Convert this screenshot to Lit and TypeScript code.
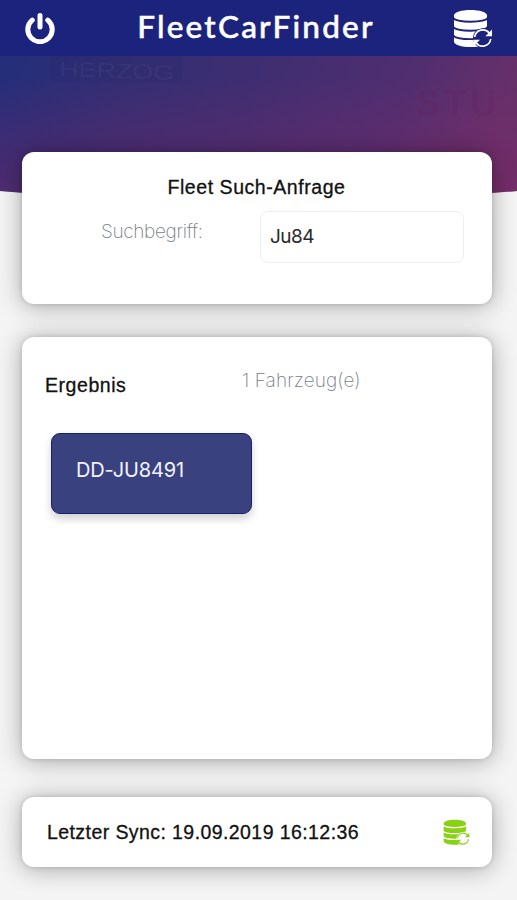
import { LitElement, html, svg, css } from "lit";
import { customElement, property } from "lit/decorators.js";

@customElement("database-sync-icon")
class DatabaseSyncIcon extends LitElement {
  static styles = css`
    :host { display: block; color: #fff; --ring: #1b237d; }
    svg { display: block; width: 100%; height: 100%; }
    .body { fill: currentColor; }
    .gap { fill: none; stroke: var(--ring); stroke-width: 1.9; }
    .knock { fill: var(--ring); }
    .arc { fill: none; stroke: currentColor; stroke-width: 1.7; }
  `;
  render() {
    return html`<svg viewBox="0 0 40 40">
      <path class="body" d="M1 6.5C1 3.2 8.500 1 17.500 1S34 3.200 34 6.500V32.500C34 36 26.500 38 17.500 38S1 36 1 32.500Z" />
      ${[8.8, 17.8, 26.2].map(
        (y) => svg`<path class="gap" d="M0 ${y}C3 ${y + 5.2} 32 ${y + 5.2} 35 ${y}" />`
      )}
      <circle class="knock" cx="29.700" cy="29" r="9.800" />
      <path class="arc" d="M21.700 28A8.200 8.200 0 0 1 36.400 24.200M37.700 30A8.200 8.200 0 0 1 23 33.800" />
      <path class="body" d="M39 20.500V27.200H32.400ZM20.400 37.500V30.800H27Z" />
    </svg>`;
  }
}

@customElement("app-card")
class AppCard extends LitElement {
  static styles = css`
    :host {
      display: block;
      box-sizing: border-box;
      margin: 0 25px 0 22px;
      background: #fff;
      border-radius: 12px;
      box-shadow: 0 2px 24px rgba(0, 0, 0, 0.32), 0 0 5px rgba(0, 0, 0, 0.14);
    }
  `;
  render() {
    return html`<slot></slot>`;
  }
}

@customElement("vehicle-tile")
class VehicleTile extends LitElement {
  @property() plate = "";
  static styles = css`
    :host {
      display: block;
      box-sizing: border-box;
      width: 201px;
      height: 81px;
      padding: 23px 24px;
      border: 1.5px solid #16206f;
      border-radius: 9px;
      background: #3a417f;
      box-shadow: 0 5px 8px rgba(0, 0, 0, 0.18);
      color: #f1f3ff;
      font: 400 20px/26px Inter, sans-serif;
      letter-spacing: -0.15px;
      white-space: nowrap;
    }
  `;
  render() {
    return html`${this.plate}`;
  }
}

@customElement("app-root")
class AppRoot extends LitElement {
  static styles = css`
    :host {
      display: flex;
      flex-direction: column;
      position: relative;
      height: 900px;
      overflow: hidden;
      background: #f4f4f4;
      color: #111;
      font-family: "Liberation Sans", Arial, sans-serif;
    }
    header {
      display: grid;
      grid-template-columns: 60px 1fr 60px;
      align-items: center;
      flex: none;
      height: 56px;
      background: #1b237d;
      color: #fff;
      position: relative;
    }
    .power { width: 32px; height: 32px; margin-left: 24px; }
    .title {
      margin: 0;
      padding: 0 5px 5px 0;
      text-align: center;
      font: 500 31.5px/36px Lato, sans-serif;
      letter-spacing: 2.2px;
      -webkit-text-stroke: 0.5px #fff;
      white-space: nowrap;
    }
    .sync { width: 40px; height: 40px; margin: 1px 0 0 -4px; }
    .hero {
      position: absolute;
      top: 56px;
      left: 0;
      width: 100%;
      height: 142px;
    }
    .ghost { font: 400 21px "Liberation Sans", sans-serif; fill: #5a5a96; fill-opacity: 0.2; }
    .ghost.red { font-size: 36px; font-weight: 700; fill: #641753; fill-opacity: 0.2; }
    main { display: flex; flex-direction: column; position: relative; padding-top: 96px; }
    h2 { margin: 0; font-size: 19.5px; font-weight: 400; line-height: 24px; -webkit-text-stroke: 0.3px #111; white-space: nowrap; }
    .search { height: 152px; padding: 23px 28px 0 79px; }
    .search h2 { text-align: center; padding-right: 52px; letter-spacing: 0.55px; }
    .field { display: flex; justify-content: space-between; margin-top: 12px; }
    label, .count { color: #777d84; font: 200 19px/24px Inter, sans-serif; white-space: nowrap; }
    label { margin-top: 9px; letter-spacing: -0.35px; }
    .count { margin-top: 1px; letter-spacing: 0.1px; }
    input {
      box-sizing: border-box;
      width: 204px;
      height: 52px;
      padding: 0 9px 2px;
      border: 1px solid #eee;
      border-radius: 8px;
      outline: none;
      background: #fff;
      color: #2a2a2a;
      font: 400 19px Inter, sans-serif;
      letter-spacing: -0.5px;
    }
    .results { height: 422px; margin-top: 33px; padding: 31px 23px; }
    .summary { display: grid; grid-template-columns: 197px 1fr; height: 65px; }
    .summary h2 { margin-top: 5px; letter-spacing: 0.55px; }
    .status {
      display: flex;
      align-items: center;
      justify-content: space-between;
      height: 70px;
      margin-top: 38px;
      padding: 0 22px 0 25px;
    }
    .status h2 { letter-spacing: 0.42px; }
    .mini { width: 27px; height: 27px; color: #88d113; --ring: #fff; }
    vehicle-tile { margin-left: 6px; }
  `;

  render() {
    return html`
      <svg class="hero" viewBox="0 0 517 142" preserveAspectRatio="none">
        <defs>
          <linearGradient id="sky" x1="0" y1="0" x2="1" y2="0.1">
            <stop offset="0" stop-color="#242e7a" />
            <stop offset="0.25" stop-color="#342e73" />
            <stop offset="0.5" stop-color="#3e2e71" />
            <stop offset="0.8" stop-color="#502e70" />
            <stop offset="1" stop-color="#66306a" />
          </linearGradient>
          <linearGradient id="dusk" x1="0" y1="0" x2="0" y2="1">
            <stop offset="0.15" stop-color="#8a2766" stop-opacity="0" />
            <stop offset="1" stop-color="#8a2766" stop-opacity="0.42" />
          </linearGradient>
        </defs>
        <path fill="url(#sky)" d="M0 0H517V135Q258 158 0 135Z" />
        <path fill="#241f62" fill-opacity="0.15" d="M50 0H182V26H50Z" />
        <text class="ghost" x="59" y="20" textLength="115" lengthAdjust="spacingAndGlyphs" transform="rotate(2 58 19)">HERZOG</text>
        <text class="ghost red" x="416" y="60" textLength="80">STU</text>
        <path fill="url(#dusk)" d="M0 0H517V135Q258 158 0 135Z" />
      </svg>
      <header>
        <svg class="power" viewBox="0 0 32 32" fill="none" stroke="#fff" stroke-width="5" stroke-linecap="round">
          <path d="M16 3.500V15M8.200 8.100A12.200 12.200 0 1 0 23.800 8.100" />
        </svg>
        <h1 class="title">FleetCarFinder</h1>
        <database-sync-icon class="sync"></database-sync-icon>
      </header>
      <main>
        <app-card class="search">
          <h2>Fleet Such-Anfrage</h2>
          <div class="field">
            <label for="term">Suchbegriff:</label>
            <input id="term" .value=${"Ju84"} />
          </div>
        </app-card>
        <app-card class="results">
          <div class="summary">
            <h2>Ergebnis</h2>
            <span class="count">1 Fahrzeug(e)</span>
          </div>
          <vehicle-tile plate="DD-JU8491"></vehicle-tile>
        </app-card>
        <app-card class="status">
          <h2>Letzter Sync: 19.09.2019 16:12:36</h2>
          <database-sync-icon class="mini"></database-sync-icon>
        </app-card>
      </main>
    `;
  }
}
